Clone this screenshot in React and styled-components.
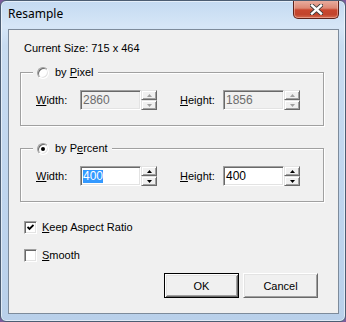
import React from 'react';
import styled, { createGlobalStyle } from 'styled-components';

const GlobalStyle = createGlobalStyle`
  html, body { margin: 0; padding: 0; }
  body { background: #7c5c9c; font-family: "Liberation Sans", Arial, sans-serif; }
  #root { width: 346px; height: 322px; }
`;

const Window = styled.div`
  box-sizing: border-box;
  width: 346px;
  height: 322px;
  display: flex;
  flex-direction: column;
  border: 1px solid #4c5d72;
  border-radius: 6px;
  background: linear-gradient(180deg, #c4daf1 0%, #d6e6f7 8%, #c8dcf1 14%, #bfd5ee 60%, #b9d0ea 100%);
  box-shadow: inset 0 0 0 1px rgba(255, 255, 255, 0.55);
  overflow: hidden;
`;

const TitleBar = styled.div`
  height: 28px;
  display: flex;
  justify-content: space-between;
  align-items: flex-start;
  padding-left: 7px;
`;

const Title = styled.div`
  font-family: "Noto Sans", sans-serif;
  font-size: 12px;
  line-height: 16px;
  color: #000;
  margin-top: 5px;
`;

const CloseButton = styled.div`
  width: 46px;
  height: 19px;
  margin-top: -1px;
  margin-right: 6px;
  box-sizing: border-box;
  border: 1px solid #5e221a;
  border-top: none;
  border-radius: 0 0 5px 5px;
  background: linear-gradient(180deg, #eab1a3 0%, #dd8874 45%, #c9472f 55%, #c2442c 80%, #d46a4f 100%);
  box-shadow: inset 0 0 0 1px rgba(255, 210, 200, 0.45);
  display: flex;
  align-items: center;
  justify-content: center;
`;

const Client = styled.div`
  flex: 1;
  margin: 0 6px 7px 7px;
  border: 1px solid #7d8b9b;
  background: #f0f0f0;
  display: flex;
  flex-direction: column;
  font-size: 11px;
  color: #000;
`;

const SizeText = styled.div`
  margin: 12px 0 0 15px;
  line-height: 13px;
`;

const GroupBox = styled.div`
  box-sizing: border-box;
  width: 304px;
  height: 54px;
  margin: ${(p) => p.$top}px 0 0 11px;
  border: 1px solid #a0a0a0;
  box-shadow: inset 1px 1px 0 #fff, 1px 1px 0 #fff;
`;

const Legend = styled.div`
  display: flex;
  align-items: center;
  gap: 6px;
  width: max-content;
  height: 13px;
  margin: -7px 0 0 12px;
  padding: 0 4px;
  background: #f0f0f0;
  line-height: 13px;
`;

const Radio = styled.span`
  box-sizing: border-box;
  width: 12px;
  height: 12px;
  border-radius: 50%;
  border: 1px solid;
  border-color: #a0a0a0 #ffffff #ffffff #a0a0a0;
  box-shadow: inset 1px 1px 0 #696969, inset -1px -1px 0 #e3e3e3;
  background: #fff;
  display: flex;
  align-items: center;
  justify-content: center;
  &::after {
    content: "";
    width: 4px;
    height: 4px;
    border-radius: 50%;
    background: ${(p) => (p.$checked ? '#000' : 'transparent')};
  }
`;

const Row = styled.div`
  display: flex;
  align-items: center;
  margin-top: 11px;
  padding-left: 15px;
  height: 20px;
`;

const FieldLabel = styled.label`
  width: ${(p) => p.$w}px;
  margin-left: ${(p) => p.$gap || 0}px;
  line-height: 13px;
`;

const TextBox = styled.div`
  box-sizing: border-box;
  width: 61px;
  height: 20px;
  border: 1px solid;
  border-color: #a0a0a0 #ffffff #ffffff #a0a0a0;
  box-shadow: inset 1px 1px 0 #696969, inset -1px -1px 0 #e3e3e3;
  background: ${(p) => (p.$disabled ? '#f0f0f0' : '#ffffff')};
  color: ${(p) => (p.$disabled ? '#6d6d6d' : '#000')};
  font-size: 12px;
  line-height: 18px;
  padding-left: 2px;
  display: flex;
  align-items: center;
`;

const Selection = styled.span`
  background: #3399ff;
  color: #fff;
  line-height: 13px;
`;

const Spinner = styled.div`
  display: flex;
  flex-direction: column;
  width: 16px;
  height: 20px;
`;

const SpinButton = styled.div`
  box-sizing: border-box;
  height: 10px;
  border: 1px solid;
  border-color: #e3e3e3 #696969 #696969 #e3e3e3;
  box-shadow: inset 1px 1px 0 #ffffff, inset -1px -1px 0 #a0a0a0;
  background: #f0f0f0;
  display: flex;
  align-items: center;
  justify-content: center;
`;

const CheckRow = styled.div`
  display: flex;
  align-items: center;
  gap: 5px;
  height: 13px;
  margin: ${(p) => p.$top}px 0 0 15px;
  line-height: 13px;
`;

const CheckBox = styled.span`
  box-sizing: border-box;
  width: 13px;
  height: 13px;
  border: 1px solid;
  border-color: #a0a0a0 #ffffff #ffffff #a0a0a0;
  box-shadow: inset 1px 1px 0 #696969, inset -1px -1px 0 #e3e3e3;
  background: #fff;
  display: flex;
  align-items: center;
  justify-content: center;
`;

const ButtonRow = styled.div`
  display: flex;
  justify-content: flex-end;
  gap: 4px;
  margin-top: 11px;
  padding-right: 20px;
`;

const Button = styled.div`
  box-sizing: border-box;
  width: 75px;
  height: 25px;
  display: flex;
  align-items: center;
  justify-content: center;
  font-size: 11px;
  background: #f0f0f0;
  border: 1px solid;
  border-color: ${(p) => (p.$default ? '#000 #000 #000 #000' : '#ffffff #696969 #696969 #ffffff')};
  box-shadow: ${(p) =>
    p.$default
      ? 'inset 1px 1px 0 #ffffff, inset -1px -1px 0 #696969, inset 2px 2px 0 #e3e3e3, inset -2px -2px 0 #a0a0a0'
      : 'inset 1px 1px 0 #e3e3e3, inset -1px -1px 0 #a0a0a0'};
`;

const Arrow = ({ up, color }) => (
  <svg width="5" height="3" viewBox="0 0 5 3">
    <polygon points={up ? '2.5,0 5,3 0,3' : '0,0 5,0 2.5,3'} fill={color} />
  </svg>
);

const SpinBox = ({ disabled }) => {
  const c = disabled ? '#a0a0a0' : '#000';
  return (
    <Spinner>
      <SpinButton>
        <Arrow up color={c} />
      </SpinButton>
      <SpinButton>
        <Arrow color={c} />
      </SpinButton>
    </Spinner>
  );
};

const DimRow = ({ disabled, width, height, selectWidth }) => (
  <Row>
    <FieldLabel $w={44}>
      <u>W</u>idth:
    </FieldLabel>
    <TextBox $disabled={disabled}>
      {selectWidth ? <Selection>{width}</Selection> : width}
    </TextBox>
    <SpinBox disabled={disabled} />
    <FieldLabel $w={43} $gap={23}>
      <u>H</u>eight:
    </FieldLabel>
    <TextBox $disabled={disabled}>{height}</TextBox>
    <SpinBox disabled={disabled} />
  </Row>
);

export default function App() {
  return (
    <>
      <GlobalStyle />
      <Window>
        <TitleBar>
          <Title>Resample</Title>
          <CloseButton>
            <svg width="13" height="11" viewBox="0 0 13 11">
              <path d="M2 1.5 L11 9.5 M11 1.5 L2 9.5" stroke="#3a3a3a" strokeWidth="4.2" strokeLinecap="square" />
              <path d="M2 1.5 L11 9.5 M11 1.5 L2 9.5" stroke="#ffffff" strokeWidth="2.4" strokeLinecap="square" />
            </svg>
          </CloseButton>
        </TitleBar>
        <Client>
          <SizeText>Current Size: 715 x 464</SizeText>
          <GroupBox $top={17}>
            <Legend>
              <Radio />
              <span>
                by <u>P</u>ixel
              </span>
            </Legend>
            <DimRow disabled width="2860" height="1856" />
          </GroupBox>
          <GroupBox $top={22}>
            <Legend>
              <Radio $checked />
              <span>
                by P<u>e</u>rcent
              </span>
            </Legend>
            <DimRow width="400" height="400" selectWidth />
          </GroupBox>
          <CheckRow $top={19}>
            <CheckBox>
              <svg width="7" height="7" viewBox="0 0 7 7">
                <path d="M0.5 3 L2.5 5 L6.5 1" stroke="#000" strokeWidth="1.8" fill="none" />
              </svg>
            </CheckBox>
            <span>
              <u>K</u>eep Aspect Ratio
            </span>
          </CheckRow>
          <CheckRow $top={15}>
            <CheckBox />
            <span>
              <u>S</u>mooth
            </span>
          </CheckRow>
          <ButtonRow>
            <Button $default>OK</Button>
            <Button>Cancel</Button>
          </ButtonRow>
        </Client>
      </Window>
    </>
  );
}
